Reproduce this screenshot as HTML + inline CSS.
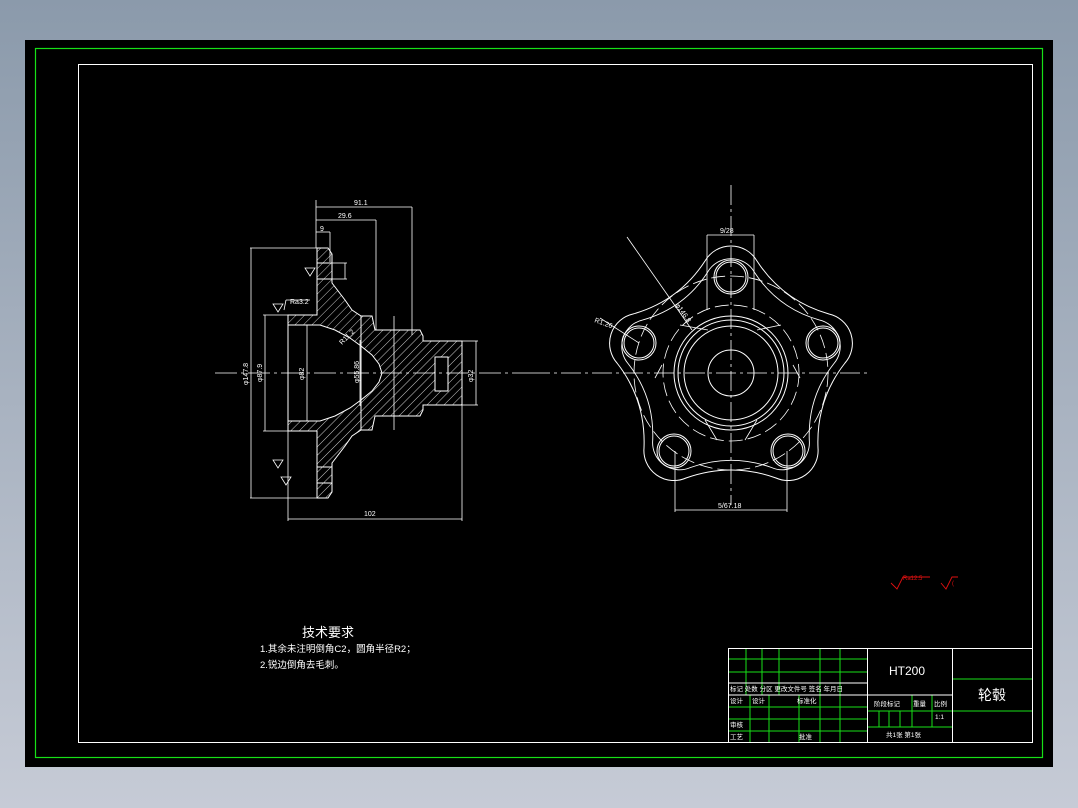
<!DOCTYPE html>
<html><head><meta charset="utf-8"><style>
html,body{margin:0;padding:0}
body{width:1078px;height:808px;background:linear-gradient(#8b9aab,#c6cbd6);overflow:hidden;font-family:"Liberation Sans","Noto Sans CJK SC",sans-serif}
svg{position:absolute;left:0;top:0}
</style></head><body>
<svg width="1078" height="808" viewBox="0 0 1078 808" xmlns="http://www.w3.org/2000/svg">
<defs>
<pattern id="h" width="6" height="6" patternUnits="userSpaceOnUse" patternTransform="rotate(45)">
<rect width="6" height="6" fill="#000"/><line x1="0" y1="0" x2="0" y2="6" stroke="#fff" stroke-width="0.8"/>
</pattern>
</defs>
<rect x="25" y="40" width="1028" height="727" fill="#000"/>
<rect x="35.5" y="48.5" width="1007" height="709" fill="none" stroke="#17e017" stroke-width="1.2"/>
<rect x="78.5" y="64.5" width="954" height="678" fill="none" stroke="#fff" stroke-width="1"/>

<!-- section view -->
<g stroke="#fff" stroke-width="1" fill="none">
<path fill="url(#h)" d="M317,248 L328,248 L332,254 L332,283 L345,300 L352,310 L361,316 L372,316 L375,330 L420,330 L423,336 L423,341 L462,341 L462,405 L423,405 L423,410 L420,416 L375,416 L372,430 L361,430 L352,436 L345,446 L332,463 L332,492 L328,498 L317,498 L317,431 L288,431 L288,315 L317,315 Z"/>
<path fill="#000" d="M288,325 L320,325 L335,330 L350,338 L361,346 L372,355 L379,364 L382,373 L379,382 L372,391 L361,400 L350,408 L335,416 L320,421 L288,421 Z"/>
<rect x="435" y="357" width="13" height="34" fill="#000"/>
<line x1="361" y1="316" x2="361" y2="430"/>
<line x1="317" y1="263" x2="332" y2="263"/><line x1="317" y1="279" x2="332" y2="279"/>
<line x1="317" y1="467" x2="332" y2="467"/><line x1="317" y1="483" x2="332" y2="483"/>
<!-- dims -->
<g stroke-width="0.8">
<line x1="316" y1="207" x2="412" y2="207"/><line x1="412" y1="207" x2="412" y2="335"/><line x1="316" y1="200" x2="316" y2="248"/>
<line x1="316" y1="220" x2="376" y2="220"/><line x1="376" y1="220" x2="376" y2="330"/>
<line x1="316" y1="232" x2="330" y2="232"/><line x1="330" y1="232" x2="330" y2="262"/>
<line x1="332" y1="263" x2="347" y2="263"/><line x1="332" y1="279" x2="347" y2="279"/><line x1="345" y1="263" x2="345" y2="279"/>
<line x1="250" y1="248" x2="317" y2="248"/><line x1="250" y1="498" x2="317" y2="498"/><line x1="251" y1="248" x2="251" y2="498"/>
<line x1="263" y1="315" x2="288" y2="315"/><line x1="263" y1="431" x2="288" y2="431"/><line x1="265" y1="315" x2="265" y2="431"/>
<line x1="307" y1="325" x2="307" y2="421"/><line x1="360" y1="340" x2="360" y2="406"/><line x1="394" y1="316" x2="394" y2="430"/>
<line x1="288" y1="431" x2="288" y2="521"/><line x1="462" y1="405" x2="462" y2="521"/><line x1="288" y1="519" x2="462" y2="519"/>
<line x1="462" y1="341" x2="478" y2="341"/><line x1="462" y1="405" x2="478" y2="405"/><line x1="476" y1="341" x2="476" y2="405"/>
<line x1="284" y1="310" x2="286" y2="300" /><line x1="286" y1="300" x2="310" y2="300"/>
<path d="M273,304 L283,304 L278,312 Z"/><path d="M305,268 L315,268 L310,276 Z"/><path d="M273,460 L283,460 L278,468 Z M281,477 L291,477 L286,485 Z"/>
</g>
<line x1="215" y1="373" x2="530" y2="373" stroke-dasharray="22,4,3,4" stroke-width="0.8"/>
</g>
<g fill="#fff" font-size="7">
<text x="354" y="205">91.1</text><text x="338" y="218">29.6</text><text x="364" y="516">102</text>
<text x="320" y="231">9</text>
<text transform="translate(248,385) rotate(-90)">φ147.8</text>
<text transform="translate(262,382) rotate(-90)">φ87.9</text>
<text transform="translate(304,380) rotate(-90)">φ82</text>
<text transform="translate(359,383) rotate(-90)">φ55.86</text>
<text transform="translate(473,382) rotate(-90)">φ32</text>
<text x="290" y="304">Ra3.2</text>
<text transform="translate(342,345) rotate(-45)">R11.2</text>
</g>

<!-- front view -->
<g stroke="#fff" stroke-width="1" fill="none">
<path d="M705,261 A30,30 0 0 1 757,261 Q783,301 829,314 A30,30 0 0 1 845,363 Q816,400 818,448 A30,30 0 0 1 776,478 Q731,462 686,478 A30,30 0 0 1 644,448 Q646,400 617,363 A30,30 0 0 1 633,314 Q679,301 705,261 Z"/>
<path transform="translate(731,373) scale(0.9) translate(-731,-373)" d="M705,261 A30,30 0 0 1 757,261 Q783,301 829,314 A30,30 0 0 1 845,363 Q816,400 818,448 A30,30 0 0 1 776,478 Q731,462 686,478 A30,30 0 0 1 644,448 Q646,400 617,363 A30,30 0 0 1 633,314 Q679,301 705,261 Z"/>
<circle cx="731" cy="373" r="57"/><circle cx="731" cy="373" r="53"/><circle cx="731" cy="373" r="47"/><circle cx="731" cy="373" r="23"/>
<circle cx="731" cy="373" r="97" stroke-dasharray="14,5" stroke-width="0.8"/>
<circle cx="731" cy="373" r="68" stroke-dasharray="14,5" stroke-width="0.8"/>
<g>
<circle cx="731" cy="277" r="17"/><circle cx="731" cy="277" r="15"/>
<circle cx="823" cy="343" r="17"/><circle cx="823" cy="343" r="15"/>
<circle cx="788" cy="451" r="17"/><circle cx="788" cy="451" r="15"/>
<circle cx="674" cy="451" r="17"/><circle cx="674" cy="451" r="15"/>
<circle cx="639" cy="343" r="17"/><circle cx="639" cy="343" r="15"/>
</g>
<g stroke-width="0.8">
<line x1="731" y1="185" x2="731" y2="505" stroke-dasharray="20,4,3,4"/>
<line x1="530" y1="373" x2="870" y2="373" stroke-dasharray="20,4,3,4"/>
<line x1="707" y1="235" x2="707" y2="310"/><line x1="754" y1="235" x2="754" y2="310"/><line x1="707" y1="235" x2="754" y2="235"/>
<line x1="675" y1="451" x2="675" y2="512"/><line x1="787" y1="451" x2="787" y2="512"/><line x1="675" y1="510" x2="787" y2="510"/>
<line x1="627" y1="237" x2="692" y2="330"/>
<line x1="600" y1="318" x2="639" y2="343"/>
<line x1="680" y1="325" x2="708" y2="330"/><line x1="757" y1="330" x2="781" y2="325"/>
<line x1="793" y1="365" x2="800" y2="378"/><line x1="662" y1="365" x2="655" y2="378"/>
<line x1="757" y1="420" x2="745" y2="440"/><line x1="705" y1="420" x2="717" y2="440"/>
</g>
</g>
<g fill="#fff" font-size="7">
<text x="720" y="233">9/28</text><text x="718" y="508">5/67.18</text>
<text x="594" y="322" transform="rotate(20,594,322)">R1.26</text>
<text transform="translate(675,305) rotate(55)">φ146.8</text>
</g>

<!-- red symbols -->
<g stroke="#e01010" fill="none" stroke-width="0.9">
<path d="M891,583 L897,589 L903,577 L930,577"/><path d="M941,583 L946,589 L952,577 L958,577"/>
</g>
<text x="903" y="580" fill="#e01010" font-size="6">Ra12.5</text><text x="952" y="585" fill="#e01010" font-size="6">(</text>

<!-- tech requirements -->
<g fill="#fff">
<text x="302" y="637" font-size="13">技术要求</text>
<text x="260" y="652" font-size="9.5">1.其余未注明倒角C2，圆角半径R2；</text>
<text x="260" y="668" font-size="9.5">2.锐边倒角去毛刺。</text>
</g>

<!-- title block -->
<g stroke="#17e017" stroke-width="1">
<line x1="746" y1="648" x2="746" y2="695"/><line x1="762" y1="648" x2="762" y2="695"/><line x1="779" y1="648" x2="779" y2="695"/>
<line x1="820" y1="648" x2="820" y2="743"/><line x1="840" y1="648" x2="840" y2="743"/>
<line x1="750" y1="695" x2="750" y2="743"/><line x1="769" y1="695" x2="769" y2="743"/><line x1="799" y1="695" x2="799" y2="743"/>
<line x1="728" y1="659" x2="867" y2="659"/><line x1="728" y1="672" x2="867" y2="672"/>
<line x1="728" y1="707" x2="867" y2="707"/><line x1="728" y1="719" x2="867" y2="719"/><line x1="728" y1="731" x2="867" y2="731"/>
<line x1="867" y1="711" x2="952" y2="711"/><line x1="867" y1="727" x2="952" y2="727"/>
<line x1="879" y1="711" x2="879" y2="727"/><line x1="889" y1="711" x2="889" y2="727"/><line x1="900" y1="711" x2="900" y2="727"/>
<line x1="912" y1="695" x2="912" y2="727"/><line x1="932" y1="695" x2="932" y2="727"/>
<line x1="952" y1="679" x2="1033" y2="679"/><line x1="952" y1="711" x2="1033" y2="711"/>
</g>
<g stroke="#fff" stroke-width="1" fill="none">
<rect x="728.5" y="648.5" width="304" height="94"/>
<line x1="728" y1="683" x2="867" y2="683"/><line x1="728" y1="695" x2="867" y2="695"/>
<line x1="867.5" y1="648" x2="867.5" y2="743"/><line x1="952.5" y1="648" x2="952.5" y2="743"/>
<line x1="867" y1="695" x2="952" y2="695"/>
</g>
<g fill="#fff" font-size="6.5">
<text x="730" y="691">标记 处数 分区 更改文件号 签名 年月日</text>
<text x="730" y="703">设计</text><text x="752" y="703">设计</text><text x="797" y="703">标准化</text>
<text x="730" y="727">审核</text><text x="730" y="739">工艺</text><text x="799" y="739">批准</text>
<text x="874" y="706">阶段标记</text><text x="913" y="706">重量</text><text x="934" y="706">比例</text>
<text x="935" y="719">1:1</text><text x="886" y="737">共1张 第1张</text>
</g>
<text x="889" y="675" fill="#fff" font-size="12">HT200</text>
<text x="978" y="700" fill="#fff" font-size="14">轮毂</text>
</svg>
</body></html>
